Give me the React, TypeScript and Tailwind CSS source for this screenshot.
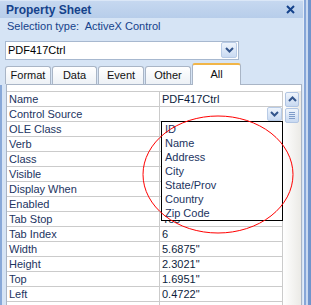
import React from "react";

const font = { fontFamily: '"Liberation Sans", Arial, sans-serif' };

function ChevronDown({ color = "#33558c" }: { color?: string }) {
  return (
    <svg width="9" height="6" viewBox="0 0 9 6">
      <path d="M1 1 L4.5 4.5 L8 1" fill="none" stroke={color} strokeWidth="2" />
    </svg>
  );
}

function ChevronUp() {
  return (
    <svg width="9" height="6" viewBox="0 0 9 6">
      <path d="M1 5 L4.5 1.5 L8 5" fill="none" stroke="#33558c" strokeWidth="2" />
    </svg>
  );
}

const rows: [string, string][] = [
  ["Name", "PDF417Ctrl"],
  ["Control Source", ""],
  ["OLE Class", ""],
  ["Verb", ""],
  ["Class", ""],
  ["Visible", ""],
  ["Display When", ""],
  ["Enabled", ""],
  ["Tab Stop", "Yes"],
  ["Tab Index", "6"],
  ["Width", '5.6875"'],
  ["Height", '2.3021"'],
  ["Top", '1.6951"'],
  ["Left", '0.4722"'],
  ["", ""],
];

const listItems = ["ID", "Name", "Address", "City", "State/Prov", "Country", "Zip Code"];

const tabs = [
  { label: "Format", w: "w-[46px]" },
  { label: "Data", w: "w-[45px]" },
  { label: "Event", w: "w-[46px]" },
  { label: "Other", w: "w-[46px]" },
];

export default function App() {
  return (
    <div
      className="relative flex w-[311px] h-[305px] overflow-hidden bg-[#d6e4f5] text-[11px]"
      style={font}
    >
      <div className="flex flex-col w-[303px] h-full">
        {/* title */}
        <div className="flex items-center justify-between h-[18px] pl-[6px] pr-[8px] bg-gradient-to-b from-[#c6d8f0] to-[#b7cdea] border-t border-[#dbe7f7]">
          <span className="text-[12px] font-bold text-[#15428b]">Property Sheet</span>
          <svg width="9" height="9" viewBox="0 0 9 9">
            <path d="M1 1 L8 8 M8 1 L1 8" stroke="#15428b" strokeWidth="2" />
          </svg>
        </div>

        <div className="mt-[1px] h-[15px] leading-[15px] pl-[7px] text-[#15428b] whitespace-pre">
          Selection type:  ActiveX Control
        </div>

        {/* combo */}
        <div className="mt-[7px] ml-[5px] w-[234px] h-[20px] flex items-center bg-white border border-[#a7b8cf]">
          <span className="flex-1 pl-[2px] text-black">PDF417Ctrl</span>
          <div className="mr-[1px] w-[16px] h-[16px] flex items-center justify-center rounded-[2px] border border-[#b8cbe6] bg-gradient-to-b from-[#eef4fc] to-[#c9daf2]">
            <ChevronDown />
          </div>
        </div>

        {/* tabs */}
        <div className="mt-[3px] ml-[5px] h-[21px] flex items-end gap-[1px]">
          {tabs.map((t) => (
            <div
              key={t.label}
              className={`${t.w} h-[18px] flex items-center justify-center pt-[1px] rounded-t-[3px] border border-b-0 border-[#a9b5c6] bg-gradient-to-b from-white to-[#edf1f6] text-[#111]`}
            >
              {t.label}
            </div>
          ))}
          <div className="relative z-10 -mb-[1px] w-[49px] h-[22px] flex items-center justify-center rounded-t-[3px] border border-b-0 border-[#a9b5c6] border-t-2 border-t-[#f1b548] bg-white text-[#111] pb-[1px]">
            All
          </div>
        </div>

        {/* tab panel */}
        <div className="flex-1 ml-[6px] mr-[1px] bg-white border-l border-t border-r border-[#a9b5c6] pt-[6px]">
          <div className="flex">
            <div className="flex flex-col w-[276px] border-t border-[#cbcbcb]">
              {rows.map(([label, value], i) => (
                <div key={i} className="flex h-[15px] border-b border-[#cbcbcb]">
                  <div className="w-[153px] pl-[2px] leading-[14px] border-r border-[#cbcbcb] text-[#1c3461]">
                    {label}
                  </div>
                  <div className="relative w-[123px] pl-[2px] leading-[14px] border-r border-[#cbcbcb] text-[#0d1d3d]">
                    {value}
                    {label === "Control Source" && (
                      <div className="absolute right-[0px] top-[0px] w-[15px] h-[14px] flex items-center justify-center rounded-[2px] border border-[#b8cbe6] bg-gradient-to-b from-[#eef4fc] to-[#c9daf2]">
                        <ChevronDown />
                      </div>
                    )}
                  </div>
                </div>
              ))}
            </div>
            <div className="w-[18px] flex flex-col items-center pt-[1px] gap-[1px] bg-gradient-to-r from-white to-[#ebeae6]">
              <div className="w-[14px] h-[15px] flex items-center justify-center rounded-[2px] border border-[#b1c5e3] bg-gradient-to-b from-[#f0f5fc] to-[#c8d9f1]">
                <ChevronUp />
              </div>
              <div className="w-[14px] h-[15px] flex flex-col items-center justify-center gap-[1px] rounded-[2px] border border-[#b1c5e3] bg-gradient-to-b from-[#f0f5fc] to-[#c8d9f1]">
                <div className="w-[6px] h-[1px] bg-[#7f9cc9]" />
                <div className="w-[6px] h-[1px] bg-[#7f9cc9]" />
                <div className="w-[6px] h-[1px] bg-[#7f9cc9]" />
                <div className="w-[6px] h-[1px] bg-[#7f9cc9]" />
              </div>
            </div>
          </div>
        </div>
      </div>

      {/* right frame */}
      <div className="flex w-[8px] h-full">
        <div className="w-[1px] bg-[#e4ecf7]" />
        <div className="w-[2px] bg-[#86a6d8]" />
        <div className="w-[2px] bg-[#c9d9f0]" />
        <div className="w-[3px] bg-[#7094cc]" />
      </div>

      {/* left frame line */}
      <div className="absolute left-0 top-[85px] bottom-0 w-[2px] bg-[#88a8d8]" />

      {/* dropdown list */}
      <div className="absolute left-[161px] top-[121px] w-[122px] h-[100px] bg-white border border-black">
        {listItems.map((it) => (
          <div key={it} className="h-[14px] leading-[14px] pl-[3px] text-[#1c3461]">
            {it}
          </div>
        ))}
      </div>

      {/* annotation */}
      <svg className="absolute left-0 top-0 pointer-events-none" width="311" height="305">
        <ellipse cx="218" cy="174.5" rx="75" ry="58.5" fill="none" stroke="#ff0000" strokeWidth="1" />
      </svg>
    </div>
  );
}
